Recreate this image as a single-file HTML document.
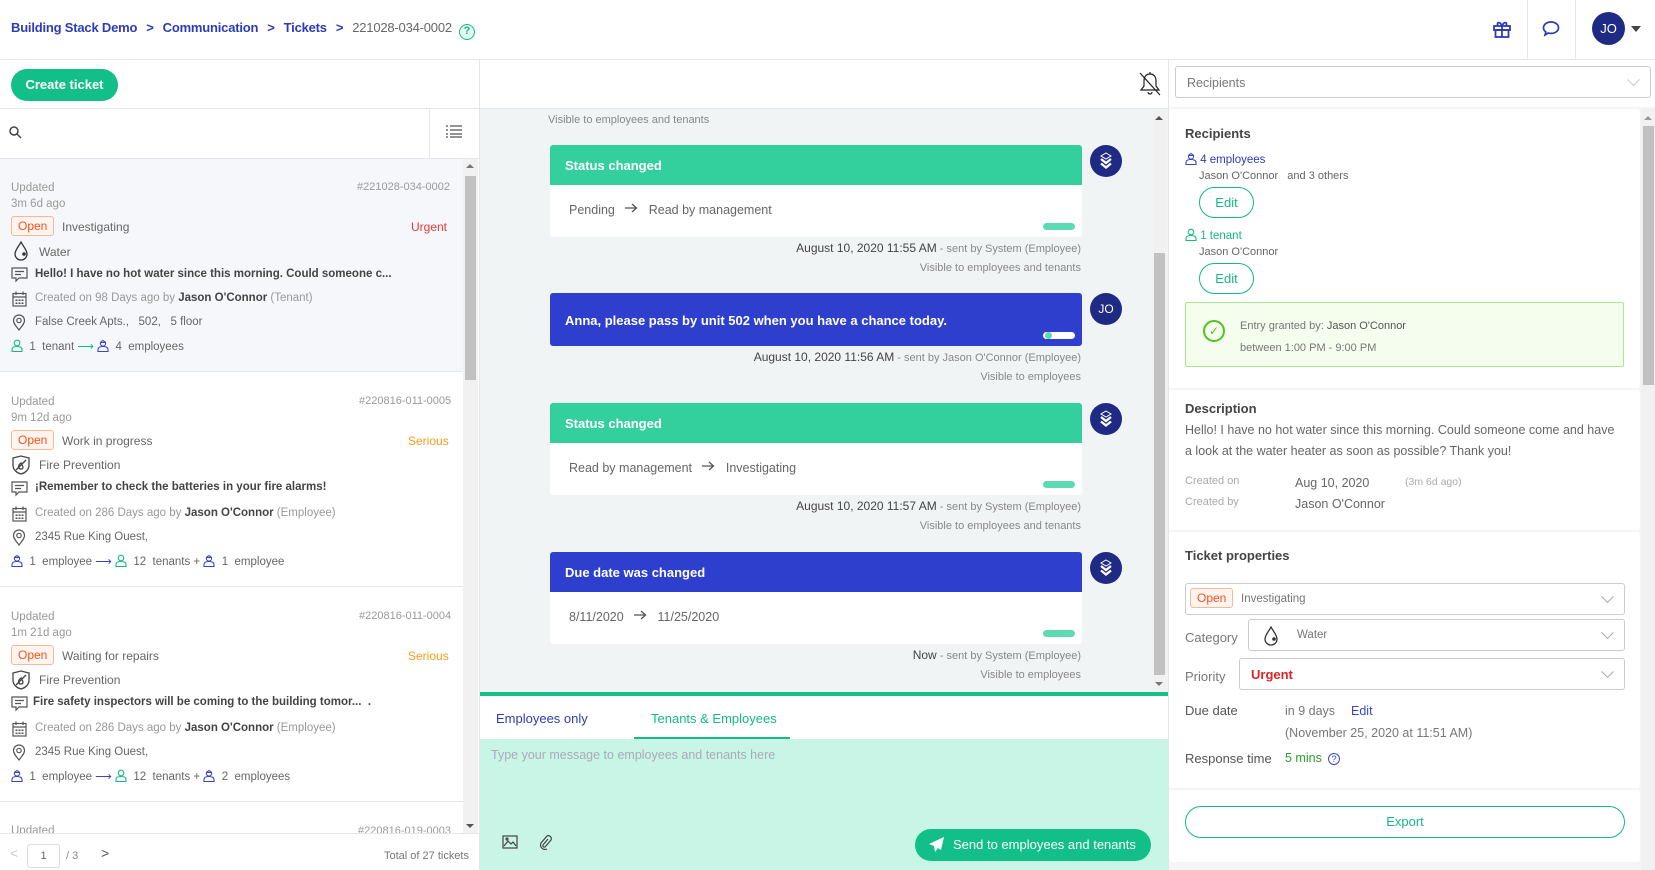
<!DOCTYPE html>
<html><head><meta charset="utf-8">
<style>
*{box-sizing:border-box;margin:0;padding:0}
body{width:1655px;height:870px;overflow:hidden;background:#fff;font-family:"Liberation Sans",sans-serif;color:#555;position:relative;font-size:12px}
.a{position:absolute}
.blue{color:#2d3bb8}
.gray{color:#999}
.lbl{color:#666}
.chip{position:absolute;border:1px solid #f7b89a;background:#fff4ee;color:#f4511e;border-radius:3px;padding:2px 6px;font-size:12px}
.item{position:absolute;left:0;width:463px;border-bottom:1px solid #e4e7ea;height:215px}
.card{position:absolute;left:550px;width:532px;border-radius:3px;overflow:hidden;background:#fff}
.card .h{height:40px;color:#fff;font-size:13px;font-weight:bold;padding:13px 0 0 15px}
.card .b{height:52px;padding:18px 0 0 19px;font-size:12.5px;color:#666;position:relative}
.pill{position:absolute;right:7px;bottom:7px;width:32px;height:7px;border-radius:4px;background:#5cdab2}
.av{position:absolute;left:1090px;width:32px;height:32px;border-radius:50%;background:#1f2a85;color:#fff;font-size:12px;text-align:center;line-height:32px}
.av svg{margin-top:7px}
.meta{position:absolute;right:574px;font-size:11px;color:#888;text-align:right;white-space:nowrap}
.meta b{font-weight:normal;color:#444;font-size:12px}
.sel{position:absolute;border:1px solid #ccc;border-radius:3px;background:#fff}
.chev{position:absolute;right:12px;top:50%;width:9px;height:9px;border-right:1px solid #aaa;border-bottom:1px solid #aaa;transform:translateY(-75%) rotate(45deg)}
.btnE{position:absolute;left:1199px;width:55px;height:31px;border:1px solid #15b886;border-radius:16px;color:#15b886;text-align:center;line-height:29px;font-size:13px}
.p{display:inline-block;vertical-align:-2px}
.arr{display:inline-block;vertical-align:1px}
</style></head><body>
<svg width="0" height="0" style="position:absolute">
<defs>
<symbol id="per" viewBox="0 0 12 13"><g fill="none" stroke="currentColor" stroke-width="1.1"><circle cx="6" cy="4" r="2.8"/><path d="M1 12.5v-2c0-2 2-3 5-3s5 1 5 3v2z"/></g></symbol>
<symbol id="emp" viewBox="0 0 12 13"><g fill="none" stroke="currentColor" stroke-width="1.1"><circle cx="6" cy="4.5" r="2.6"/><path d="M3.2 3.5h5.6M6 1v1.5M1 12.5v-2c0-2 2-3 5-3s5 1 5 3v2z"/></g></symbol>
<symbol id="drop" viewBox="0 0 16 20"><path d="M8 1C6 5 2 9 2 13a6 6 0 0012 0c0-4-4-8-6-12z" fill="none" stroke="#333" stroke-width="1.3"/><circle cx="11" cy="13" r="1.8" fill="#333"/></symbol>
<symbol id="msg" viewBox="0 0 17 16"><g fill="none" stroke="#555" stroke-width="1.2"><path d="M1 1h15v10H8l-3 3v-3H1z"/><path d="M4 4.5h9M4 7.5h6"/></g></symbol>
<symbol id="cal" viewBox="0 0 15 16"><g fill="none" stroke="#555" stroke-width="1.2"><rect x="1" y="2.5" width="13" height="12.5"/><path d="M1 6h13M4 0.5v3.5M11 0.5v3.5"/></g><g fill="#555"><rect x="3.5" y="8.5" width="2" height="1.5"/><rect x="6.5" y="8.5" width="2" height="1.5"/><rect x="9.5" y="8.5" width="2" height="1.5"/><rect x="3.5" y="11.5" width="2" height="1.5"/><rect x="6.5" y="11.5" width="2" height="1.5"/><rect x="9.5" y="11.5" width="2" height="1.5"/></g></symbol>
<symbol id="pin" viewBox="0 0 14 17"><g fill="none" stroke="#555" stroke-width="1.2"><path d="M7 16c-3-4-5.5-6.5-5.5-9.5a5.5 5.5 0 0111 0C12.5 9.5 10 12 7 16z"/><circle cx="7" cy="6.5" r="2.2"/></g></symbol>
<symbol id="shield" viewBox="0 0 20 20"><g fill="none" stroke="#444" stroke-width="1.3"><path d="M2 3l8-2 8 2v7c0 5-4 8-8 9-4-1-8-4-8-9z"/><path d="M9 14c-2-1-2-4 1-6 0 2 2 2 2 4s-1 2-3 2z"/><path d="M5 15l10-10"/></g></symbol>
<symbol id="sys" viewBox="0 0 14 18"><g fill="none" stroke="#fff" stroke-width="1"><path d="M7 1l5 3-5 3-5-3z"/></g><g fill="none" stroke="#fff" stroke-width="2.3"><path d="M2 7l5 4 5-4M2 11.5l5 4 5-4"/></g></symbol>
</defs></svg>

<!-- header -->
<div class="a" style="left:0;top:0;width:1655px;height:60px;border-bottom:1px solid #e6e6e6"></div>
<div class="a" style="left:11px;top:20px;font-size:13px;font-weight:bold;white-space:nowrap;letter-spacing:-0.2px"><span class="blue">Building Stack Demo</span><span class="blue" style="margin:0 9px">&gt;</span><span class="blue">Communication</span><span class="blue" style="margin:0 9px">&gt;</span><span class="blue">Tickets</span><span class="blue" style="margin:0 9px">&gt;</span><span style="color:#666;font-weight:normal">221028-034-0002</span><span style="display:inline-block;margin-left:7px;width:16px;height:16px;border:1.5px solid #15b886;border-radius:50%;color:#15b886;font-size:11px;text-align:center;line-height:13px;background:#e3f8f1;vertical-align:-2px">?</span></div>
<svg class="a" style="left:1492px;top:19px" width="20" height="20" viewBox="0 0 20 20" fill="none" stroke="#2d3bb8" stroke-width="1.8"><rect x="2" y="7" width="16" height="4"/><rect x="3.5" y="11" width="13" height="7"/><path d="M10 7v11M10 7C8 2 4 3 6 7M10 7c2-5 6-4 4 0"/></svg>
<div class="a" style="left:1527px;top:0;width:1px;height:60px;background:#e6e6e6"></div>
<svg class="a" style="left:1542px;top:20px" width="18" height="17" viewBox="0 0 18 17" fill="none" stroke="#2d3bb8" stroke-width="1.7"><path d="M9 2c4.4 0 7.5 2.5 7.5 5.7S13.4 13.4 9 13.4c-1 0-2-.1-2.8-.4L3 15l.8-3.1C2.3 10.9 1.5 9.4 1.5 7.7 1.5 4.5 4.6 2 9 2z"/></svg>
<div class="a" style="left:1575px;top:0;width:1px;height:60px;background:#e6e6e6"></div>
<div class="a" style="left:1592px;top:12px;width:33px;height:33px;border-radius:50%;background:#1f2a85;color:#fff;font-size:13px;text-align:center;line-height:33px">JO</div>
<div class="a" style="left:1631px;top:26px;border-left:5px solid transparent;border-right:5px solid transparent;border-top:6px solid #444"></div>

<!-- left panel -->
<div class="a" style="left:479px;top:60px;width:1px;height:810px;background:#e4e7ea"></div>
<div class="a" style="left:11px;top:69px;width:107px;height:32px;border-radius:16px;background:#13bf88;color:#fff;font-size:13px;font-weight:bold;text-align:center;line-height:32px">Create ticket</div>
<div class="a" style="left:0;top:108px;width:479px;height:1px;background:#e4e7ea"></div>
<svg class="a" style="left:9px;top:126px" width="13" height="13" viewBox="0 0 13 13" fill="none" stroke="#444" stroke-width="1.5"><circle cx="5" cy="5" r="4"/><path d="M8 8l4 4"/></svg>
<div class="a" style="left:429px;top:108px;width:1px;height:50px;background:#e4e7ea"></div>
<svg class="a" style="left:446px;top:125px" width="16" height="13" viewBox="0 0 16 13" stroke="#555" stroke-width="1.2"><path d="M0 1h2M4 1h12M0 5h2M4 5h12M0 9h2M4 9h12M0 12h2M4 12h12"/></svg>
<div class="a" style="left:0;top:158px;width:479px;height:1px;background:#e4e7ea"></div>
<div class="a" style="left:463px;top:159px;width:15px;height:674px;background:#f1f1f1"></div>
<div class="a" style="left:465px;top:176px;width:11px;height:204px;background:#c1c1c1"></div>
<div class="a" style="left:466px;top:164px;border-left:4px solid transparent;border-right:4px solid transparent;border-bottom:4px solid #777"></div>
<div class="a" style="left:466px;top:824px;border-left:4px solid transparent;border-right:4px solid transparent;border-top:4px solid #555"></div>

<div class="item" style="top:159px;height:213px;background:#f5f7fb"></div>
<!-- item 1 -->
<div class="a gray" style="left:11px;top:180px;font-size:11.5px;line-height:16px">Updated<br>3m 6d ago</div>
<div class="a gray" style="left:357px;top:181px;font-size:11px">#221028-034-0002</div>
<div class="chip" style="left:11px;top:216px">Open</div>
<div class="a lbl" style="left:62px;top:220px">Investigating</div>
<div class="a" style="left:411px;top:220px;color:#e53935">Urgent</div>
<svg class="a" style="left:13px;top:241px" width="16" height="20"><use href="#drop"/></svg>
<div class="a lbl" style="left:39px;top:245px">Water</div>
<svg class="a" style="left:11px;top:267px" width="17" height="16"><use href="#msg"/></svg>
<div class="a" style="left:35px;top:268px;font-weight:bold;color:#444;font-size:11.5px">Hello! I have no hot water since this morning. Could someone c...</div>
<svg class="a" style="left:12px;top:291px" width="15" height="16"><use href="#cal"/></svg>
<div class="a gray" style="left:35px;top:292px;font-size:11.5px">Created on 98 Days ago by <b style="color:#444">Jason O'Connor</b> (Tenant)</div>
<svg class="a" style="left:12px;top:314px" width="14" height="17"><use href="#pin"/></svg>
<div class="a lbl" style="left:35px;top:316px;font-size:11.5px">False Creek Apts.,&nbsp;&nbsp; 502,&nbsp;&nbsp; 5 floor</div>
<div class="a lbl" style="left:11px;top:339px;font-size:11.5px"><svg class="p" width="12" height="13" style="color:#15b886"><use href="#per"/></svg>&nbsp; 1&nbsp; tenant <span style="color:#15b886">⟶</span> <svg class="p" width="12" height="13" style="color:#3947c4"><use href="#emp"/></svg>&nbsp; 4&nbsp; employees</div>

<!-- item 2 -->
<div class="item" style="top:372px;background:#fff"></div>
<div class="a gray" style="left:11px;top:394px;font-size:11.5px;line-height:16px">Updated<br>9m 12d ago</div>
<div class="a gray" style="left:359px;top:395px;font-size:11px">#220816-011-0005</div>
<div class="chip" style="left:11px;top:430px">Open</div>
<div class="a lbl" style="left:62px;top:434px">Work in progress</div>
<div class="a" style="left:408px;top:434px;color:#f59c1a">Serious</div>
<svg class="a" style="left:11px;top:455px" width="20" height="20"><use href="#shield"/></svg>
<div class="a" style="left:39px;top:458px;color:#666">Fire Prevention</div>
<svg class="a" style="left:11px;top:481px" width="17" height="16"><use href="#msg"/></svg>
<div class="a" style="left:35px;top:481px;font-weight:bold;color:#444;font-size:11.5px">¡Remember to check the batteries in your fire alarms!</div>
<svg class="a" style="left:12px;top:506px" width="15" height="16"><use href="#cal"/></svg>
<div class="a gray" style="left:35px;top:507px;font-size:11.5px">Created on 286 Days ago by <b style="color:#444">Jason O'Connor</b> (Employee)</div>
<svg class="a" style="left:12px;top:529px" width="14" height="17"><use href="#pin"/></svg>
<div class="a lbl" style="left:35px;top:531px;font-size:11.5px">2345 Rue King Ouest,</div>
<div class="a lbl" style="left:11px;top:554px;font-size:11.5px"><svg class="p" width="12" height="13" style="color:#3947c4"><use href="#emp"/></svg>&nbsp; 1&nbsp; employee <span style="color:#3947c4">⟶</span> <svg class="p" width="12" height="13" style="color:#15b886"><use href="#per"/></svg>&nbsp; 12&nbsp; tenants + <svg class="p" width="12" height="13" style="color:#3947c4"><use href="#emp"/></svg>&nbsp; 1&nbsp; employee</div>

<!-- item 3 -->
<div class="item" style="top:587px;background:#fff"></div>
<div class="a gray" style="left:11px;top:609px;font-size:11.5px;line-height:16px">Updated<br>1m 21d ago</div>
<div class="a gray" style="left:359px;top:610px;font-size:11px">#220816-011-0004</div>
<div class="chip" style="left:11px;top:645px">Open</div>
<div class="a lbl" style="left:62px;top:649px">Waiting for repairs</div>
<div class="a" style="left:408px;top:649px;color:#f59c1a">Serious</div>
<svg class="a" style="left:11px;top:670px" width="20" height="20"><use href="#shield"/></svg>
<div class="a" style="left:39px;top:673px;color:#666">Fire Prevention</div>
<svg class="a" style="left:11px;top:696px" width="17" height="16"><use href="#msg"/></svg>
<div class="a" style="left:33px;top:696px;font-weight:bold;color:#444;font-size:11.5px">Fire safety inspectors will be coming to the building tomor...&nbsp; .</div>
<svg class="a" style="left:12px;top:721px" width="15" height="16"><use href="#cal"/></svg>
<div class="a gray" style="left:35px;top:722px;font-size:11.5px">Created on 286 Days ago by <b style="color:#444">Jason O'Connor</b> (Employee)</div>
<svg class="a" style="left:12px;top:744px" width="14" height="17"><use href="#pin"/></svg>
<div class="a lbl" style="left:35px;top:746px;font-size:11.5px">2345 Rue King Ouest,</div>
<div class="a lbl" style="left:11px;top:769px;font-size:11.5px"><svg class="p" width="12" height="13" style="color:#3947c4"><use href="#emp"/></svg>&nbsp; 1&nbsp; employee <span style="color:#3947c4">⟶</span> <svg class="p" width="12" height="13" style="color:#15b886"><use href="#per"/></svg>&nbsp; 12&nbsp; tenants + <svg class="p" width="12" height="13" style="color:#3947c4"><use href="#emp"/></svg>&nbsp; 2&nbsp; employees</div>
<div class="a gray" style="left:11px;top:825px;font-size:11.5px">Updated</div>
<div class="a gray" style="left:358px;top:825px;font-size:11px">#220816-019-0003</div>
<!-- footer -->
<div class="a" style="left:0;top:833px;width:479px;height:37px;background:#fff;border-top:1px solid #e4e7ea"></div>
<div class="a" style="left:10px;top:845px;color:#ccc;font-size:14px">&lt;</div>
<div class="a" style="left:27px;top:844px;width:33px;height:24px;border:1px solid #ddd;border-radius:3px;text-align:center;line-height:22px;font-size:11px;color:#666">1</div>
<div class="a" style="left:66px;top:850px;color:#888;font-size:11px">/ 3</div>
<div class="a" style="left:101px;top:845px;color:#555;font-size:14px">&gt;</div>
<div class="a" style="left:384px;top:850px;color:#777;font-size:11px">Total of 27 tickets</div>

<!-- middle -->
<div class="a" style="left:1168px;top:60px;width:1px;height:810px;background:#e4e7ea"></div>
<svg class="a" style="left:1139px;top:71px" width="22" height="26" viewBox="0 0 22 26" fill="none" stroke="#222" stroke-width="1.2"><path d="M11 3c-4 0-6 3-6 7v5l-3 4h18l-3-4v-5c0-4-2-7-6-7zM9 21a2 2 0 004 0M11 1v2M1 2l20 22"/></svg>
<div class="a" style="left:480px;top:108px;width:688px;height:585px;background:#f1f4f5;border-top:1px solid #e4e7ea"></div>
<div class="a" style="left:1153px;top:110px;width:14px;height:582px;background:#f1f1f1"></div>
<div class="a" style="left:1154px;top:253px;width:11px;height:422px;background:#c1c1c1"></div>
<div class="a" style="left:1155px;top:116px;border-left:4px solid transparent;border-right:4px solid transparent;border-bottom:4px solid #555"></div>
<div class="a" style="left:1155px;top:682px;border-left:4px solid transparent;border-right:4px solid transparent;border-top:4px solid #777"></div>
<div class="a" style="left:548px;top:114px;font-size:11px;color:#888">Visible to employees and tenants</div>

<div class="card" style="top:145px"><div class="h" style="background:#33cf9c">Status changed</div><div class="b">Pending &nbsp;&nbsp;<svg class="arr" width="13" height="10" viewBox="0 0 13 10" fill="none" stroke="#555" stroke-width="1.3"><path d="M0 5h12M7 1l4.5 4L7 9"/></svg>&nbsp;&nbsp; Read by management<div class="pill"></div></div></div>
<div class="av" style="top:145px"><svg width="14" height="18"><use href="#sys"/></svg></div>
<div class="meta" style="top:241px"><b>August 10, 2020 11:55 AM</b> - sent by System (Employee)</div>
<div class="meta" style="top:262px">Visible to employees and tenants</div>

<div class="card" style="top:293px;background:#2d3fcc;height:53px"><div class="h" style="padding-top:20px">Anna, please pass by unit 502 when you have a chance today.</div><div class="pill" style="background:#fff;bottom:7px"></div><div class="a" style="right:30px;bottom:7px;width:7px;height:7px;border-radius:50%;background:#5cdab2"></div></div>
<div class="av" style="top:293px">JO</div>
<div class="meta" style="top:350px"><b>August 10, 2020 11:56 AM</b> - sent by Jason O'Connor (Employee)</div>
<div class="meta" style="top:371px">Visible to employees</div>

<div class="card" style="top:403px"><div class="h" style="background:#33cf9c">Status changed</div><div class="b">Read by management &nbsp;&nbsp;<svg class="arr" width="13" height="10" viewBox="0 0 13 10" fill="none" stroke="#555" stroke-width="1.3"><path d="M0 5h12M7 1l4.5 4L7 9"/></svg>&nbsp;&nbsp; Investigating<div class="pill"></div></div></div>
<div class="av" style="top:403px"><svg width="14" height="18"><use href="#sys"/></svg></div>
<div class="meta" style="top:499px"><b>August 10, 2020 11:57 AM</b> - sent by System (Employee)</div>
<div class="meta" style="top:520px">Visible to employees and tenants</div>

<div class="card" style="top:552px"><div class="h" style="background:#2d3fcc">Due date was changed</div><div class="b">8/11/2020 &nbsp;&nbsp;<svg class="arr" width="13" height="10" viewBox="0 0 13 10" fill="none" stroke="#555" stroke-width="1.3"><path d="M0 5h12M7 1l4.5 4L7 9"/></svg>&nbsp;&nbsp; 11/25/2020<div class="pill"></div></div></div>
<div class="av" style="top:552px"><svg width="14" height="18"><use href="#sys"/></svg></div>
<div class="meta" style="top:648px"><b>Now</b> - sent by System (Employee)</div>
<div class="meta" style="top:669px">Visible to employees</div>

<div class="a" style="left:480px;top:692px;width:688px;height:4px;background:#13bf88"></div>
<div class="a" style="left:496px;top:711px;font-size:13px;color:#2d3bb8">Employees only</div>
<div class="a" style="left:651px;top:711px;font-size:13px;color:#15b886">Tenants &amp; Employees</div>
<div class="a" style="left:634px;top:737px;width:156px;height:2px;background:#15b886"></div>
<div class="a" style="left:480px;top:739px;width:688px;height:131px;background:#c8f5e6"></div>
<div class="a" style="left:491px;top:748px;font-size:12.5px;color:#aab">Type your message to employees and tenants here</div>
<svg class="a" style="left:502px;top:835px" width="16" height="14" viewBox="0 0 16 14" fill="none" stroke="#444" stroke-width="1.2"><rect x="1" y="1" width="14" height="12"/><path d="M2 11l4-5 3 3 2-2 3 4"/><circle cx="5" cy="4" r="1"/></svg>
<svg class="a" style="left:538px;top:834px" width="14" height="16" viewBox="0 0 14 16" fill="none" stroke="#444" stroke-width="1.2"><path d="M10 5l-5 6a1.5 1.5 0 002 2l6-7a3 3 0 00-4-4L3 9a4.5 4.5 0 006 6"/></svg>
<div class="a" style="left:915px;top:829px;width:236px;height:32px;border-radius:16px;background:#13bf88;color:#fff;font-size:13px;line-height:32px;padding-left:38px">Send to employees and tenants</div>
<svg class="a" style="left:928px;top:836px" width="17" height="17" viewBox="0 0 17 17" fill="#fff"><path d="M16 1L1 8l5 2 1 6 3-4 3 2z"/></svg>

<!-- right panel -->
<div class="sel" style="left:1175px;top:66px;width:476px;height:32px"><span class="a" style="left:11px;top:9px;color:#777;font-size:12.5px">Recipients</span><div class="chev" style="border-color:#ccc"></div></div>
<div class="a" style="left:1169px;top:107px;width:486px;height:763px;background:#f5f5f5"></div>
<div class="a" style="left:1641px;top:108px;width:14px;height:762px;background:#f1f1f1"></div>
<div class="a" style="left:1643px;top:126px;width:11px;height:259px;background:#c1c1c1"></div>
<div class="a" style="left:1644px;top:116px;border-left:4px solid transparent;border-right:4px solid transparent;border-bottom:4px solid #999"></div>
<div class="a" style="left:1169px;top:109px;width:471px;height:279px;background:#fff;border-radius:3px"></div>
<div class="a" style="left:1169px;top:390px;width:471px;height:140px;background:#fff;border-radius:3px"></div>
<div class="a" style="left:1169px;top:532px;width:471px;height:256px;background:#fff;border-radius:3px"></div>
<div class="a" style="left:1169px;top:790px;width:471px;height:72px;background:#fff;border-radius:3px"></div>

<div class="a" style="left:1185px;top:126px;font-size:13px;font-weight:bold;color:#444">Recipients</div>
<div class="a" style="left:1185px;top:152px;font-size:11.5px;color:#2d3bb8"><svg class="p" width="12" height="13" style="color:#3947c4"><use href="#emp"/></svg> 4 employees</div>
<div class="a" style="left:1199px;top:170px;font-size:11px;color:#666">Jason O'Connor &nbsp;&nbsp;and 3 others</div>
<div class="btnE" style="top:187px">Edit</div>
<div class="a" style="left:1185px;top:228px;font-size:11.5px;color:#15b886"><svg class="p" width="12" height="13" style="color:#15b886"><use href="#per"/></svg> 1 tenant</div>
<div class="a" style="left:1199px;top:246px;font-size:11px;color:#666">Jason O'Connor</div>
<div class="btnE" style="top:263px">Edit</div>
<div class="a" style="left:1185px;top:302px;width:439px;height:65px;border:1px solid #a6e88b;background:#f4fdee;border-radius:2px"></div>
<div class="a" style="left:1203px;top:320px;width:22px;height:22px;border:2px solid #52c41a;border-radius:50%;color:#52c41a;font-size:12px;text-align:center;line-height:18px">✓</div>
<div class="a" style="left:1240px;top:320px;font-size:11px;color:#777">Entry granted by: <span style="color:#555">Jason O'Connor</span></div>
<div class="a" style="left:1240px;top:342px;font-size:11px;color:#777">between 1:00 PM - 9:00 PM</div>

<div class="a" style="left:1185px;top:401px;font-size:13px;font-weight:bold;color:#444">Description</div>
<div class="a" style="left:1185px;top:420px;width:430px;font-size:12.5px;line-height:21px;color:#666">Hello! I have no hot water since this morning. Could someone come and have a look at the water heater as soon as possible? Thank you!</div>
<div class="a" style="left:1185px;top:475px;font-size:11px;color:#aaa">Created on</div>
<div class="a" style="left:1295px;top:476px;font-size:12.5px;color:#666">Aug 10, 2020</div>
<div class="a" style="left:1405px;top:476px;font-size:10.5px;color:#aaa">(3m 6d ago)</div>
<div class="a" style="left:1185px;top:496px;font-size:11px;color:#aaa">Created by</div>
<div class="a" style="left:1295px;top:497px;font-size:12.5px;color:#666">Jason O'Connor</div>

<div class="a" style="left:1185px;top:548px;font-size:13px;font-weight:bold;color:#444">Ticket properties</div>
<div class="sel" style="left:1185px;top:583px;width:440px;height:32px"><div class="chip" style="left:4px;top:4px">Open</div><span class="a" style="left:55px;top:9px;color:#777;font-size:11.5px">Investigating</span><div class="chev"></div></div>
<div class="a" style="left:1185px;top:630px;font-size:13px;color:#777">Category</div>
<div class="sel" style="left:1248px;top:619px;width:377px;height:32px"><svg class="a" style="left:14px;top:6px" width="16" height="20"><use href="#drop"/></svg><span class="a" style="left:48px;top:9px;color:#777;font-size:11.5px">Water</span><div class="chev"></div></div>
<div class="a" style="left:1185px;top:669px;font-size:13px;color:#777">Priority</div>
<div class="sel" style="left:1239px;top:658px;width:386px;height:32px"><span class="a" style="left:11px;top:8px;color:#e02424;font-size:13px;font-weight:bold">Urgent</span><div class="chev"></div></div>
<div class="a" style="left:1185px;top:703px;font-size:13px;color:#555">Due date</div>
<div class="a" style="left:1285px;top:704px;font-size:12.5px;color:#777">in 9 days</div>
<div class="a" style="left:1351px;top:704px;font-size:12.5px;color:#3947c4">Edit</div>
<div class="a" style="left:1285px;top:726px;font-size:12.5px;color:#777">(November 25, 2020 at 11:51 AM)</div>
<div class="a" style="left:1185px;top:751px;font-size:13px;color:#555">Response time</div>
<div class="a" style="left:1285px;top:751px;font-size:12.5px;color:#2e9a2e">5 mins</div>
<div class="a" style="left:1328px;top:753px;width:12px;height:12px;border:1.2px solid #3947c4;border-radius:50%;color:#3947c4;font-size:9px;text-align:center;line-height:10px">?</div>
<div class="a" style="left:1185px;top:806px;width:440px;height:32px;border:1.5px solid #15b886;border-radius:16px;color:#15b886;text-align:center;line-height:29px;font-size:13px">Export</div>
</body></html>
